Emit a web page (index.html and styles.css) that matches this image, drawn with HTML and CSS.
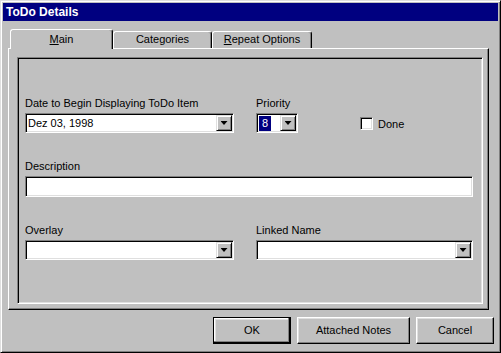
FILE: index.html
```html
<html>
    <head>
        <meta charset="utf-8">
        <link rel="stylesheet" href="styles.css">
    </head>
    <body>
        <div class="window">
            <div class="titlebar">ToDo Details</div>
            <div class="client">
                <div class="tabs">
                    <div class="tab active"><u>M</u>ain</div>
                    <div class="tab cat">Categories</div>
                    <div class="tab rep"><u>R</u>epeat Options</div>
                </div>
                <div class="pane">
                    <div class="frame">
                        <div class="grid">
                            <div class="field">
                                <label>Date to Begin Displaying ToDo Item</label>
                                <div class="combo"><span class="value">Dez 03, 1998</span><span class="drop"></span></div>
                            </div>
                            <div class="field inline">
                                <div class="priority">
                                    <label>Priority</label>
                                    <div class="combo"><span class="value"><span class="sel">8</span></span><span class="drop"></span></div>
                                </div>
                                <div class="check"><span class="box"></span>Done</div>
                            </div>
                            <div class="field wide">
                                <label>Description</label>
                                <div class="edit"></div>
                            </div>
                            <div class="field">
                                <label>Overlay</label>
                                <div class="combo"><span class="value"></span><span class="drop"></span></div>
                            </div>
                            <div class="field">
                                <label>Linked Name</label>
                                <div class="combo"><span class="value"></span><span class="drop"></span></div>
                            </div>
                        </div>
                    </div>
                </div>
                <div class="buttons">
                    <div class="btn default">OK</div>
                    <div class="btn notes">Attached Notes</div>
                    <div class="btn">Cancel</div>
                </div>
            </div>
        </div>
    </body>
</html>
```
FILE: styles.css
```css
body{
    margin: 0;
    background: #c0c0c0;
    font-family: "Liberation Sans", Arial, sans-serif;
    font-size: 11px;
    color: #000;
}
.window{
    width: 501px;
    height: 353px;
    box-sizing: border-box;
    border: 1px solid;
    border-color: #dfdfdf #000 #000 #dfdfdf;
    box-shadow: inset 1px 1px #fff, inset -1px -1px #808080;
    padding: 2px;
    background: #c0c0c0;
}
.titlebar{
    height: 18px;
    line-height: 18px;
    background: #000080;
    color: #fff;
    font-weight: bold;
    font-size: 12px;
    padding-left: 3px;
}
.client{
    padding: 8px 0 0 5px;
}
.tabs{
    display: flex;
    align-items: flex-end;
    padding-left: 2px;
}
.tab{
    height: 17px;
    box-sizing: border-box;
    border: 1px solid;
    border-bottom: none;
    border-color: #fff #000 transparent #fff;
    box-shadow: inset -1px 0 #808080;
    border-radius: 3px 3px 0 0;
    text-align: center;
    line-height: 15px;
}
.tab.active{
    width: 103px;
    height: 20px;
    margin-bottom: -1px;
    line-height: 18px;
    background: #c0c0c0;
    position: relative;
    z-index: 1;
}
.tab.cat{
    width: 99px;
}
.tab.rep{
    width: 100px;
}
.pane{
    width: 481px;
    height: 262px;
    box-sizing: border-box;
    border: 1px solid;
    border-color: #fff #000 #000 #fff;
    box-shadow: inset -1px -1px #808080;
    padding: 8px 0 0 8px;
}
.frame{
    width: 466px;
    height: 247px;
    box-sizing: border-box;
    border: 1px solid;
    border-color: #808080 #fff #fff #808080;
    box-shadow: inset 1px 1px #000, inset -1px -1px #dfdfdf;
    padding: 39px 0 0 7px;
}
.grid{
    display: grid;
    grid-template-columns: 209px 217px;
    column-gap: 22px;
    row-gap: 27px;
}
.field label{
    display: block;
    line-height: 13px;
    margin-bottom: 3px;
}
.field.wide{
    grid-column: 1 / 3;
}
.field.inline{
    display: flex;
    align-items: flex-end;
}
.priority{
    width: 42px;
}
.combo, .edit{
    box-sizing: border-box;
    height: 20px;
    border: 1px solid;
    border-color: #808080 #fff #fff #808080;
    box-shadow: inset 1px 1px #000, inset -1px -1px #dfdfdf;
    background: #fff;
    display: flex;
    align-items: center;
    padding: 1px;
}
.edit{
    height: 21px;
}
.value{
    flex: 1;
    padding-left: 1px;
    line-height: 16px;
    white-space: nowrap;
    overflow: hidden;
}
.sel{
    background: #000080;
    color: #fff;
    padding: 0 3px;
    display: inline-block;
    line-height: 15px;
}
.drop{
    width: 16px;
    height: 16px;
    box-sizing: border-box;
    background: #c0c0c0;
    border: 1px solid;
    border-color: #dfdfdf #000 #000 #dfdfdf;
    box-shadow: inset 1px 1px #fff, inset -1px -1px #808080;
    display: flex;
    align-items: center;
    justify-content: center;
}
.drop::after{
    content: '';
    width: 7px;
    height: 4px;
    background: #000;
    clip-path: polygon(0 0, 100% 0, 50% 100%);
}
.check{
    display: flex;
    align-items: center;
    margin-left: 62px;
    margin-bottom: 3px;
}
.check .box{
    width: 13px;
    height: 13px;
    box-sizing: border-box;
    border: 1px solid;
    border-color: #808080 #fff #fff #808080;
    box-shadow: inset 1px 1px #000, inset -1px -1px #dfdfdf;
    background: #fff;
    margin-right: 5px;
}
.buttons{
    display: flex;
    justify-content: flex-end;
    gap: 6px;
    margin: 7px 4px 0 0;
}
.btn{
    width: 78px;
    height: 27px;
    box-sizing: border-box;
    border: 1px solid;
    border-color: #fff #000 #000 #fff;
    box-shadow: inset -1px -1px #808080, inset 1px 1px #dfdfdf;
    line-height: 25px;
    text-align: center;
}
.btn.notes{
    width: 113px;
}
.btn.default{
    border-color: #000;
    box-shadow: inset -1px -1px #000, inset -2px -2px #808080, inset 1px 1px #fff, inset 2px 2px #dfdfdf;
}
```
